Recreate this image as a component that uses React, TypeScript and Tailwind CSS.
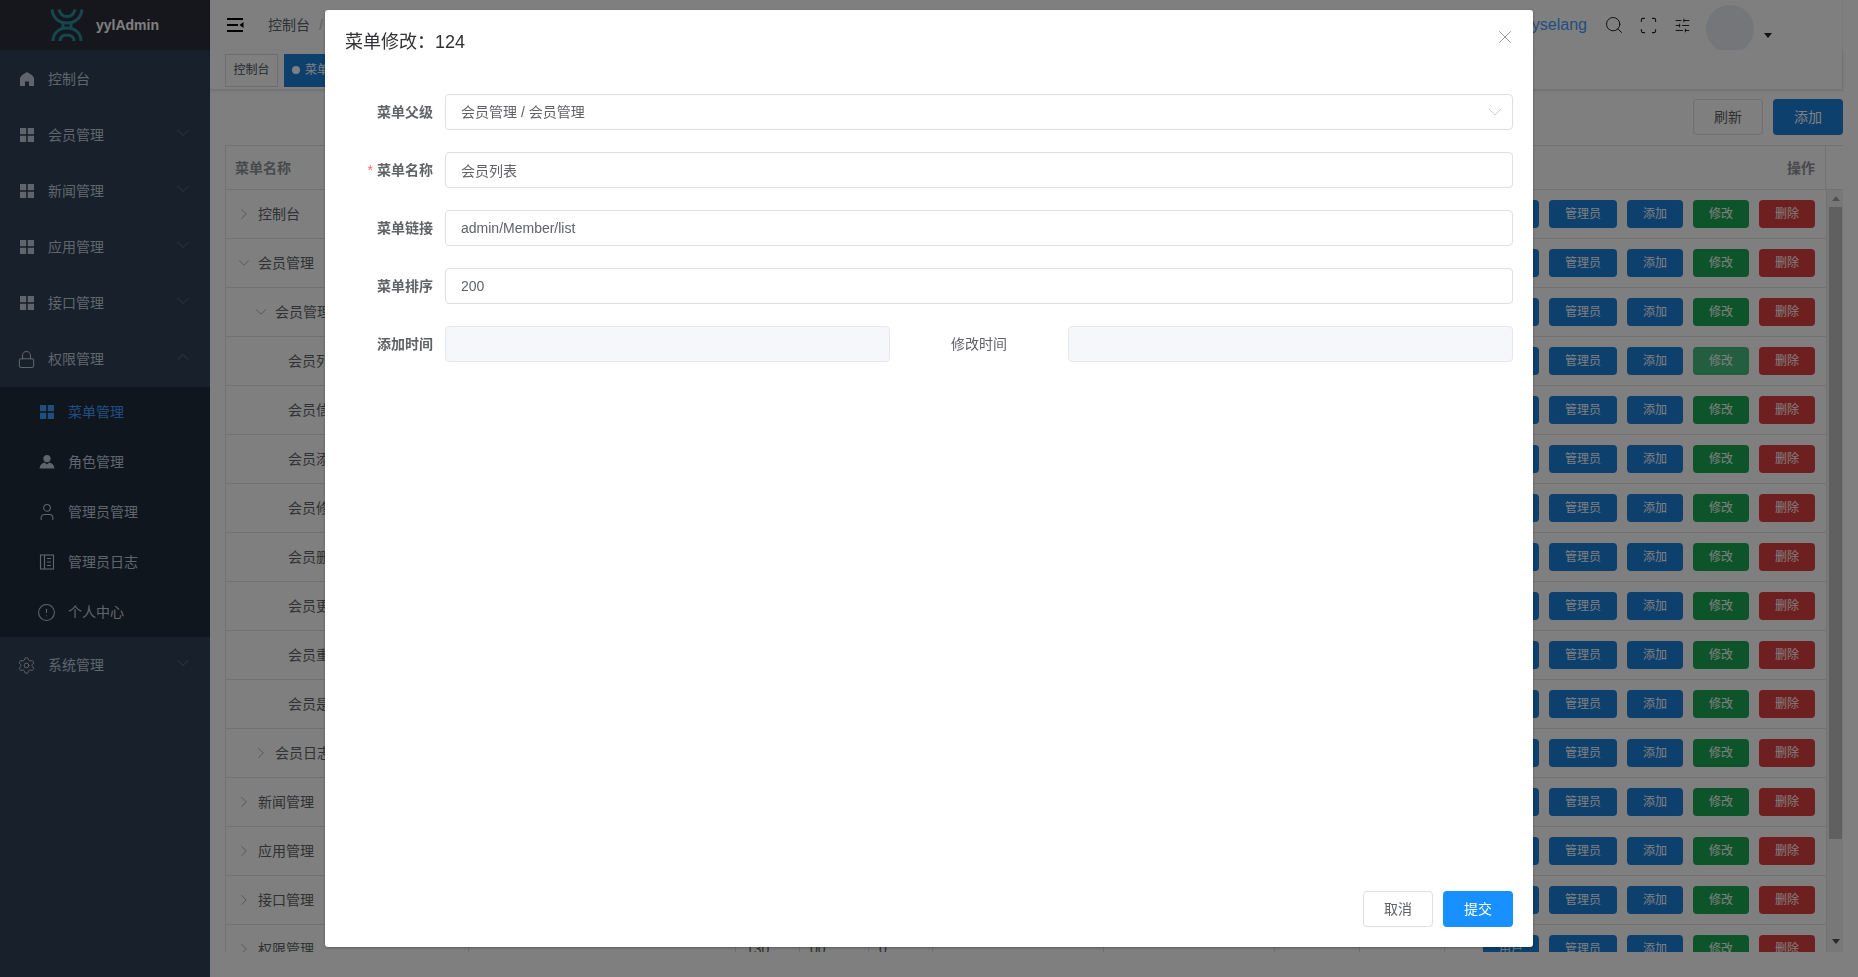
import React from 'react';
import {
  ChevronDown,
  ChevronRight,
  ChevronUp,
  CircleAlert,
  Lock,
  Scan,
  Search,
  Settings,
  SlidersHorizontal,
  User,
  X,
} from 'lucide-react';

const FONT = "font-['Liberation_Sans','Noto_Sans_CJK_SC',sans-serif]";

// filled icons from the admin theme, lucide has no close match
const GridIcon = ({ className }: { className?: string }) => (
  <svg viewBox="0 0 16 16" className={className} fill="currentColor">
    <rect x="1" y="1" width="6.2" height="6.2" />
    <rect x="8.8" y="1" width="6.2" height="6.2" />
    <rect x="1" y="8.8" width="6.2" height="6.2" />
    <rect x="8.8" y="8.8" width="6.2" height="6.2" />
  </svg>
);

const HomeIcon = ({ className }: { className?: string }) => (
  <svg viewBox="0 0 16 16" className={className} fill="currentColor">
    <path d="M8 1 C4.5 3 2 4.5 1 7 V15 H6 V10.5 H10 V15 H15 V7 C14 4.5 11.5 3 8 1 Z" />
  </svg>
);

const RoleIcon = ({ className }: { className?: string }) => (
  <svg viewBox="0 0 16 16" className={className} fill="currentColor">
    <circle cx="8" cy="4.6" r="3.6" />
    <path d="M5.6 8.6 L8 10.4 L10.4 8.6 C13 9.2 15 10.8 15.5 14.6 H0.5 C1 10.8 3 9.2 5.6 8.6 Z" />
  </svg>
);

const NotebookIcon = ({ className }: { className?: string }) => (
  <svg viewBox="0 0 16 16" className={className} fill="none" stroke="currentColor" strokeWidth="1.1">
    <rect x="1.5" y="1" width="13" height="14" />
    <path d="M5.5 1 V15 M8 4.5 H12 M8 8 H12 M8 11.5 H12" />
  </svg>
);

const Logo = () => (
  <svg viewBox="0 0 34 34" className="w-[34px] h-[34px]" fill="none" stroke="#2a8f9c" strokeWidth="3">
    <path d="M2 1.5 C3 11 10 15 17 15 C24 15 31 11 32 1.5" />
    <path d="M9 1.5 C10 6 13 8.5 17 8.5 C21 8.5 24 6 25 1.5" />
    <path d="M3 33 C3 25 9 20 17 20 C25 20 31 25 31 33" />
    <path d="M10 33 C10 29 13 27 17 27 C21 27 24 29 24 33" />
    <path d="M13 14 V21 M21 14 V21" />
  </svg>
);

const FoldIcon = () => (
  <svg viewBox="0 0 17 14" className="w-[17px] h-[14px]" fill="#000">
    <rect x="0" y="0" width="16" height="2" />
    <rect x="0" y="6" width="11" height="2" />
    <rect x="0" y="12" width="16" height="2" />
    <path d="M16.5 4 V10 L12.5 7 Z" />
  </svg>
);

const topMenu = [
  { name: '会员管理' },
  { name: '新闻管理' },
  { name: '应用管理' },
  { name: '接口管理' },
];

const subMenu = [
  { name: '菜单管理', icon: GridIcon, cls: 'w-4 h-4 mr-[13px]', active: true },
  { name: '角色管理', icon: RoleIcon, cls: 'w-4 h-4 mr-[13px]' },
  { name: '管理员管理', icon: User, cls: 'w-5 h-5 -ml-[2px] mr-[11px]' },
  { name: '管理员日志', icon: NotebookIcon, cls: 'w-4 h-4 mr-[13px]' },
  { name: '个人中心', icon: CircleAlert, cls: 'w-[19px] h-[19px] -ml-[2px] mr-[12px]' },
];

const rows = [
  { name: '控制台', indent: 'pl-[9px]', arrow: 'right', id: '1', pid: '0', sort: '200' },
  { name: '会员管理', indent: 'pl-[9px]', arrow: 'down', id: '10', pid: '0', sort: '190' },
  { name: '会员管理', indent: 'pl-[26px]', arrow: 'down', id: '11', pid: '10', sort: '200' },
  { name: '会员列表', indent: 'pl-[62px]', id: '124', pid: '11', sort: '200' },
  { name: '会员信息', indent: 'pl-[62px]', id: '125', pid: '11', sort: '190' },
  { name: '会员添加', indent: 'pl-[62px]', id: '126', pid: '11', sort: '180' },
  { name: '会员修改', indent: 'pl-[62px]', id: '127', pid: '11', sort: '170' },
  { name: '会员删除', indent: 'pl-[62px]', id: '128', pid: '11', sort: '160' },
  { name: '会员更改密码', indent: 'pl-[62px]', id: '129', pid: '11', sort: '150' },
  { name: '会员重置密码', indent: 'pl-[62px]', id: '130', pid: '11', sort: '140' },
  { name: '会员是否禁用', indent: 'pl-[62px]', id: '131', pid: '11', sort: '130' },
  { name: '会员日志', indent: 'pl-[26px]', arrow: 'right', id: '12', pid: '10', sort: '100' },
  { name: '新闻管理', indent: 'pl-[9px]', arrow: 'right', id: '20', pid: '0', sort: '180' },
  { name: '应用管理', indent: 'pl-[9px]', arrow: 'right', id: '30', pid: '0', sort: '170' },
  { name: '接口管理', indent: 'pl-[9px]', arrow: 'right', id: '40', pid: '0', sort: '160' },
  { name: '权限管理', indent: 'pl-[9px]', arrow: 'right', id: '130', pid: '00', sort: '0' },
];

const RowButton = ({ label, className }: { label: string; className: string }) => (
  <span className={`h-7 px-4 flex items-center rounded-[4px] text-xs text-white whitespace-nowrap ${className}`}>
    {label}
  </span>
);

const Sidebar = () => (
  <aside className="w-[210px] shrink-0 h-full bg-[#304156] flex flex-col">
    <div className="h-[50px] bg-[#2b2f3a] flex items-center pl-[50px] gap-[12px] overflow-hidden">
      <Logo />
      <span className="text-sm font-bold text-white">yylAdmin</span>
    </div>
    <nav className="pt-px text-sm text-[#bfcbd9]">
      <div className="h-14 flex items-center pl-[19px]">
        <HomeIcon className="w-4 h-4 mr-[13px]" />
        控制台
      </div>
      {topMenu.map((m) => (
        <div key={m.name} className="h-14 flex items-center pl-[19px] pr-[17px]">
          <GridIcon className="w-4 h-4 mr-[13px]" />
          <span className="flex-1">{m.name}</span>
          <ChevronDown size={20} strokeWidth={0.7} className="-mt-[4px] opacity-60" />
        </div>
      ))}
      <div className="h-14 flex items-center pl-[19px] pr-[17px]">
        <Lock strokeWidth={1.3} className="w-[19px] h-[19px] -ml-[2px] mr-[12px]" />
        <span className="flex-1">权限管理</span>
        <ChevronUp size={20} strokeWidth={0.7} className="-mt-[4px] opacity-60" />
      </div>
      <div className="bg-[#1f2d3d]">
        {subMenu.map((s) => (
          <div
            key={s.name}
            className={`h-[50px] flex items-center pl-[39px] ${s.active ? 'text-[#409eff]' : ''}`}
          >
            <s.icon strokeWidth={1.3} className={s.cls} />
            {s.name}
          </div>
        ))}
      </div>
      <div className="h-14 flex items-center pl-[19px] pr-[17px]">
        <Settings strokeWidth={1.2} className="w-[19px] h-[19px] -ml-[2px] mr-[12px]" />
        <span className="flex-1">系统管理</span>
        <ChevronDown size={20} strokeWidth={0.7} className="-mt-[4px] opacity-60" />
      </div>
    </nav>
  </aside>
);

const Header = () => (
  <header className="h-[50px] flex items-center overflow-hidden pl-[17px] border-r border-[#f0f0f0]">
    <FoldIcon />
    <span className="ml-[24px] text-sm text-[#606266]">控制台</span>
    <span className="mx-[9px] text-sm text-[#c0c4cc]">/</span>
    <span className="text-sm text-[#606266]">权限管理</span>
    <span className="mx-[9px] text-sm text-[#c0c4cc]">/</span>
    <span className="text-sm text-[#97a8be]">菜单管理</span>
    <div className="ml-auto flex items-center h-full">
      <span className="text-base text-[#409eff]">skyselang</span>
      <Search size={20} strokeWidth={1.2} className="ml-[17px] text-[#222]" />
      <Scan size={19} strokeWidth={1.4} className="ml-[15px] text-[#222]" />
      <SlidersHorizontal size={17} strokeWidth={1.4} className="ml-[16px] text-[#222]" />
      <div className="ml-[15px] w-12 h-12 shrink-0 rounded-full bg-[#e8ecf2] self-start mt-[5px]" />
      <svg viewBox="0 0 8 5" className="ml-[10px] mt-[20px] w-2 h-[5px]" fill="#222">
        <path d="M0 0 H8 L4 5 Z" />
      </svg>
      <div className="w-[70px]" />
    </div>
  </header>
);

const TagsBar = () => (
  <div className="h-[40px] flex items-center gap-[6px] pl-[15px] pt-px border-r border-b border-[#e6e6e6] shadow-[0_1px_3px_rgba(0,0,0,0.12)] text-xs">
    <span className="h-[33px] w-[53px] flex items-center justify-center border border-[#d8dce5] text-[#495060]">
      控制台
    </span>
    <span className="h-[33px] flex items-center gap-[5px] px-2 bg-[#1b80d9] text-white">
      <span className="w-2 h-2 rounded-full bg-white" />
      菜单管理
    </span>
  </div>
);

const MenuTable = () => (
  <div className="w-[1618px] ml-[15px] mt-[10px] border-l border-t border-[#dfe6ec] text-sm text-[#606266]">
    <div className="flex h-[44px] items-center border-b border-[#dfe6ec] font-bold text-[#909399]">
      <div className="w-[243px] pl-[9px]">菜单名称</div>
      <div className="flex-1" />
      <div className="w-[28px] text-right">操作</div>
      <div className="w-[10px]" />
      <div className="w-[18px] h-full border-l border-[#dfe6ec]" />
    </div>
    <div className="flex h-[762px] overflow-hidden">
      <div className="w-[1600px] shrink-0">
        {rows.map((r, i) => (
          <div key={i} className="flex h-[49px] shrink-0 items-center border-b border-[#dfe6ec]">
            <div className={`w-[243px] h-full flex items-center border-r border-[#dfe6ec] ${r.indent}`}>
              {r.arrow === 'right' && <ChevronRight size={18} strokeWidth={1} className="mr-[5px] text-[#909399]" />}
              {r.arrow === 'down' && <ChevronDown size={18} strokeWidth={1} className="mr-[5px] text-[#909399]" />}
              <span className="whitespace-nowrap">{r.name}</span>
            </div>
            <div className="w-[267px] h-full border-r border-[#dfe6ec]" />
            <div className="w-[64px] h-full flex items-center pl-[10px] border-r border-[#dfe6ec]">{r.id}</div>
            <div className="w-[69px] h-full flex items-center pl-[10px] border-r border-[#dfe6ec]">{r.pid}</div>
            <div className="w-[64px] h-full flex items-center pl-[10px] border-r border-[#dfe6ec]">{r.sort}</div>
            <div className="w-[171px] h-full border-r border-[#dfe6ec]" />
            <div className="w-[171px] h-full border-r border-[#dfe6ec]" />
            <div className="w-[85px] h-full border-r border-[#dfe6ec]" />
            <div className="w-[85px] h-full border-r border-[#dfe6ec]" />
            <div className="flex-1 h-full flex items-center justify-end gap-[10px] pr-[11px]">
              <RowButton label="用户" className="bg-[#1b80d9]" />
              <RowButton label="管理员" className="bg-[#1b80d9]" />
              <RowButton label="添加" className="bg-[#1b80d9]" />
              <RowButton label="修改" className={i === 3 ? 'bg-[#45bd7f]' : 'bg-[#1ca855]'} />
              <RowButton label="删除" className="bg-[#dc4040]" />
            </div>
          </div>
        ))}
      </div>
      <div className="w-[18px] shrink-0 bg-[#f1f1f1] flex flex-col items-center border-l border-[#dfe6ec]">
        <svg viewBox="0 0 8 5" className="mt-[6px] w-2 h-[5px]" fill="#a3a3a3">
          <path d="M0 5 H8 L4 0 Z" />
        </svg>
        <div className="mt-[6px] w-[13px] h-[632px] bg-[#c1c1c1]" />
        <svg viewBox="0 0 8 5" className="mt-auto mb-2 w-2 h-[5px]" fill="#505050">
          <path d="M0 0 H8 L4 5 Z" />
        </svg>
      </div>
    </div>
  </div>
);

const FormRow = ({ label, required, children }: { label: string; required?: boolean; children: React.ReactNode }) => (
  <div className="flex items-center h-9 mb-[22px]">
    <label className="w-[100px] shrink-0 pr-3 text-right text-sm font-bold text-[#606266]">
      {required && <span className="mr-1 font-normal text-[#f56c6c]">*</span>}
      {label}
    </label>
    {children}
  </div>
);

const inputCls =
  'flex-1 min-w-0 h-9 pl-[15px] pr-[15px] border border-[#dcdfe6] rounded text-sm text-[#606266] bg-white outline-none';

const MenuDialog = () => (
  <div className="fixed inset-0 z-10 bg-black/50">
    <div className="ml-[325px] mt-[10px] w-[1208px] h-[937px] flex flex-col bg-white rounded-[3px] shadow-[0_1px_3px_rgba(0,0,0,0.3)]">
      <div className="h-[84px] pl-5 pr-[17px] pt-5 flex items-start justify-between">
        <span className="text-lg leading-6 text-[#303133]">菜单修改：124</span>
        <X size={22} strokeWidth={1} className="-mt-[4px] text-[#909399]" />
      </div>
      <div className="flex-1 px-5">
        <FormRow label="菜单父级">
          <div className={`${inputCls} flex items-center justify-between`}>
            <span>会员管理 / 会员管理</span>
            <ChevronDown size={24} strokeWidth={0.9} className="text-[#c0c4cc] -mr-[10px]" />
          </div>
        </FormRow>
        <FormRow label="菜单名称" required>
          <input readOnly value="会员列表" className={inputCls} />
        </FormRow>
        <FormRow label="菜单链接">
          <input readOnly value="admin/Member/list" className={inputCls} />
        </FormRow>
        <FormRow label="菜单排序">
          <input readOnly value="200" className={inputCls} />
        </FormRow>
        <FormRow label="添加时间">
          <input disabled className="w-[445px] h-9 border border-[#e4e7ed] rounded bg-[#f5f7fa]" />
          <span className="w-[178px] text-center text-sm text-[#606266]">修改时间</span>
          <input disabled className="w-[445px] h-9 border border-[#e4e7ed] rounded bg-[#f5f7fa]" />
        </FormRow>
      </div>
      <div className="flex justify-end gap-[10px] px-5 pb-5">
        <button className="w-[70px] h-9 border border-[#dcdfe6] rounded text-sm text-[#606266] bg-white">取消</button>
        <button className="w-[70px] h-9 rounded text-sm text-white bg-[#1890ff]">提交</button>
      </div>
    </div>
  </div>
);

export default function App() {
  return (
    <div className={`relative flex w-[1858px] h-[977px] overflow-hidden bg-white ${FONT}`}>
      <Sidebar />
      <main className="flex-1 min-w-0 h-full">
        <div className="w-[1633px]">
          <Header />
          <TagsBar />
        </div>
        <div className="flex justify-end gap-[10px] w-[1633px] pt-[9px]">
          <button className="w-[70px] h-9 border border-[#dcdfe6] rounded text-sm text-[#606266]">刷新</button>
          <button className="w-[70px] h-9 rounded text-sm text-white bg-[#1b80d9]">添加</button>
        </div>
        <MenuTable />
      </main>
      <MenuDialog />
    </div>
  );
}
